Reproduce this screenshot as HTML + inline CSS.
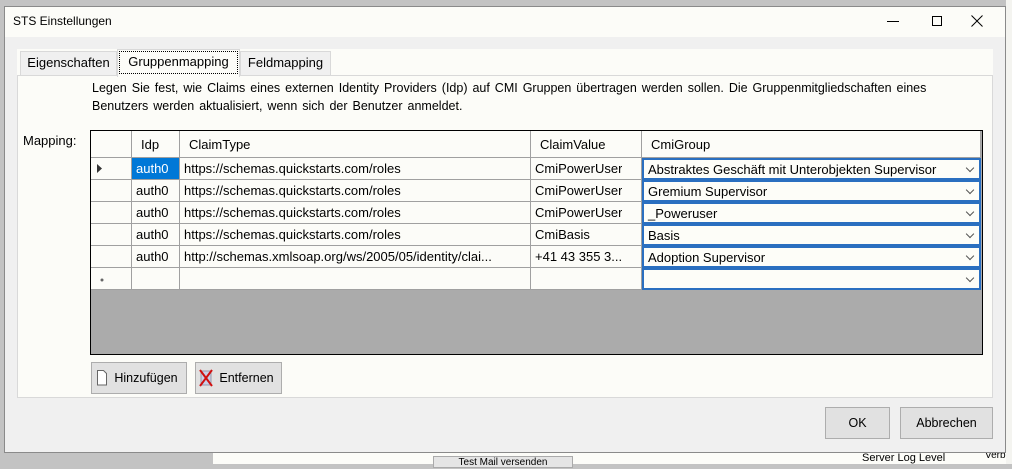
<!DOCTYPE html>
<html><head><meta charset="utf-8"><style>
*{box-sizing:border-box;margin:0;padding:0}
body{width:1012px;height:464px;overflow:hidden;background:#c3c3c3;font-family:"Liberation Sans",sans-serif;font-size:12.5px;color:#000;position:relative}
.a{position:absolute}
.cell{position:absolute;white-space:nowrap;overflow:hidden;padding-left:5px;line-height:24px;font-size:13px}
.btn{position:absolute;background:#e1e1e1;border:1px solid #adadad;text-align:center;font-size:12.5px}
.combo{position:absolute;border:2px solid #2a6fc0;background:#fdfdf8;padding-left:4px;line-height:20px;white-space:nowrap;font-size:13px}
.combo:after{content:"";position:absolute;right:6px;top:5px;width:5px;height:5px;border-right:1px solid #555;border-bottom:1px solid #555;transform:rotate(45deg)}
</style></head><body>
<div class="a" style="left:213px;top:452px;width:799px;height:12px;background:#fcfcf8"></div>
<div class="a" style="left:433px;top:456px;width:140px;height:12px;border:1px solid #aaa;background:#e5e5e5;font-size:10px;line-height:12px;text-align:center">Test Mail versenden</div>
<div class="a" style="left:862px;top:452px;font-size:11px">Server Log Level</div>
<div class="a" style="left:985px;top:450px;font-size:10px">Verbos</div>
<div class="a" style="left:1006px;top:0;width:6px;height:464px;background:#f4f4f0"></div>
<div class="a" style="left:4px;top:6px;width:1002px;height:447px;background:#f0f0f0;border:1px solid #8a8a8a"></div>
<div class="a" style="left:5px;top:7px;width:1000px;height:30px;background:#fcfcf8"></div>
<div class="a" style="left:13px;top:14px;font-size:12px">STS Einstellungen</div>
<div class="a" style="left:887px;top:21px;width:12px;height:1px;background:#000"></div>
<div class="a" style="left:932px;top:16px;width:10px;height:10px;border:1px solid #000"></div>
<svg class="a" style="left:971px;top:15px" width="12" height="12"><path d="M0.5 0.5L11.5 11.5M11.5 0.5L0.5 11.5" stroke="#000" stroke-width="1"/></svg>
<div class="a" style="left:17px;top:49px;width:976px;height:26px;background:#fcfcf8"></div>
<div class="a" style="left:20px;top:51px;width:97px;height:25px;background:#f0f0f0;border:1px solid #d9d9d9;text-align:center;line-height:22px;font-size:13px">Eigenschaften</div>
<div class="a" style="left:240px;top:51px;width:91px;height:25px;background:#f0f0f0;border:1px solid #d9d9d9;text-align:center;line-height:22px;font-size:13px">Feldmapping</div>
<div class="a" style="left:17px;top:75px;width:976px;height:323px;background:#fcfcf8;border:1px solid #d9d9d9"></div>
<div class="a" style="left:117px;top:49px;width:123px;height:28px;background:#fcfcf8;border:1px solid #d9d9d9;border-bottom:none"></div>
<div class="a" style="left:119px;top:51px;width:119px;height:23px;border:1px dotted #000;text-align:center;line-height:20px;font-size:13px">Gruppenmapping</div>
<div class="a" style="left:92px;top:80px;line-height:17.5px;width:872px;font-size:12.5px;word-spacing:1.5px">Legen Sie fest, wie Claims eines externen Identity Providers (Idp) auf CMI Gruppen übertragen werden sollen. Die Gruppenmitgliedschaften eines Benutzers werden aktualisiert, wenn sich der Benutzer anmeldet.</div>
<div class="a" style="left:23px;top:133px;font-size:13px">Mapping:</div>
<div class="a" style="left:90px;top:130px;width:893px;height:225px;background:#ababab;border:1px solid #000"></div>
<div class="a" style="left:91px;top:131px;width:890px;height:158px;background:#fcfcf8"></div>
<svg class="a" style="left:91px;top:131px" width="891" height="160">
<g stroke="#a0a0a0" stroke-width="1">
<line x1="0" y1="26.5" x2="889" y2="26.5"/>
<line x1="0" y1="48.5" x2="550" y2="48.5"/><line x1="0" y1="70.5" x2="550" y2="70.5"/>
<line x1="0" y1="92.5" x2="550" y2="92.5"/><line x1="0" y1="114.5" x2="550" y2="114.5"/>
<line x1="0" y1="136.5" x2="550" y2="136.5"/><line x1="0" y1="158.5" x2="889" y2="158.5"/>
<line x1="40.5" y1="0" x2="40.5" y2="158"/><line x1="88.5" y1="0" x2="88.5" y2="158"/>
<line x1="439.5" y1="0" x2="439.5" y2="158"/><line x1="550.5" y1="0" x2="550.5" y2="158"/>
<line x1="889.5" y1="0" x2="889.5" y2="158"/>
</g>
<path d="M6 33 L11 37.5 L6 42 Z" fill="#333"/>
<circle cx="11" cy="149" r="1.5" fill="#666"/>
</svg>
<div class="a" style="left:132px;top:158px;width:47px;height:21px;background:#0078d7"></div>
<div class="cell" style="left:136px;top:133px">Idp</div>
<div class="cell" style="left:184px;top:133px">ClaimType</div>
<div class="cell" style="left:535px;top:133px">ClaimValue</div>
<div class="cell" style="left:646px;top:133px">CmiGroup</div>
<div class="cell" style="left:131px;top:157px;color:#fff">auth0</div>
<div class="cell" style="left:131px;top:179px">auth0</div>
<div class="cell" style="left:131px;top:201px">auth0</div>
<div class="cell" style="left:131px;top:223px">auth0</div>
<div class="cell" style="left:131px;top:245px">auth0</div>
<div class="cell" style="left:179px;top:157px">https://schemas.quickstarts.com/roles</div>
<div class="cell" style="left:179px;top:179px">https://schemas.quickstarts.com/roles</div>
<div class="cell" style="left:179px;top:201px">https://schemas.quickstarts.com/roles</div>
<div class="cell" style="left:179px;top:223px">https://schemas.quickstarts.com/roles</div>
<div class="cell" style="left:179px;top:245px;width:351px">http://schemas.xmlsoap.org/ws/2005/05/identity/clai...</div>
<div class="cell" style="left:530px;top:157px">CmiPowerUser</div>
<div class="cell" style="left:530px;top:179px">CmiPowerUser</div>
<div class="cell" style="left:530px;top:201px">CmiPowerUser</div>
<div class="cell" style="left:530px;top:223px">CmiBasis</div>
<div class="cell" style="left:530px;top:245px">+41 43 355 3...</div>
<div class="combo" style="left:642px;top:158px;width:339px;height:22px">Abstraktes Geschäft mit Unterobjekten Supervisor</div>
<div class="combo" style="left:642px;top:180px;width:339px;height:22px">Gremium Supervisor</div>
<div class="combo" style="left:642px;top:202px;width:339px;height:22px">_Poweruser</div>
<div class="combo" style="left:642px;top:224px;width:339px;height:22px">Basis</div>
<div class="combo" style="left:642px;top:246px;width:339px;height:22px">Adoption Supervisor</div>
<div class="combo" style="left:642px;top:268px;width:339px;height:22px"></div>
<div class="btn" style="left:91px;top:362px;width:96px;height:32px;line-height:30px;padding-left:14px">Hinzufügen</div>
<svg class="a" style="left:96px;top:370px" width="12" height="16"><path d="M1.5 0.5h6l3 3v11.5h-9z" fill="#fff" stroke="#666"/></svg>
<div class="btn" style="left:195px;top:362px;width:87px;height:32px;line-height:30px;padding-left:16px">Entfernen</div>
<svg class="a" style="left:199px;top:369px" width="14" height="18"><rect x="2" y="2" width="10" height="14" fill="#c8d0e8" stroke="#99a"/><path d="M1 1L13 17M13 1L1 17" stroke="#d01010" stroke-width="2"/></svg>
<div class="btn" style="left:825px;top:407px;width:65px;height:32px;line-height:30px">OK</div>
<div class="btn" style="left:900px;top:407px;width:93px;height:32px;line-height:30px">Abbrechen</div>
</body></html>
